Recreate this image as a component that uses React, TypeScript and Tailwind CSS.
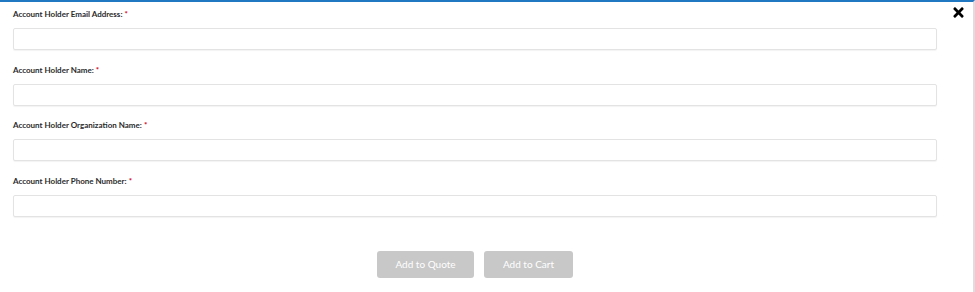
import { FaTimes } from "react-icons/fa";

const fields = [
  "Account Holder Email Address:",
  "Account Holder Name:",
  "Account Holder Organization Name:",
  "Account Holder Phone Number:",
];

export default function App() {
  return (
    <div className="relative h-[292px] w-[975px] overflow-hidden border-t-2 border-r-2 border-t-[#1f78c1] border-r-[#dedede] bg-white font-['Lato',sans-serif]">
      <button className="absolute right-[7px] top-[3px] text-black">
        <FaTimes size={15} />
      </button>

      <div className="w-[937px] pl-[13px] pt-[6px]">
        {fields.map((label) => (
          <div key={label} className="mb-[13.67px]">
            <label className="mb-[8px] flex h-[12px] items-center text-[8px] font-bold text-[#2b2b2b]">
              {label}
              <span className="ml-[2px] text-[#d0021b]">*</span>
            </label>
            <input
              type="text"
              className="block h-[22px] w-full rounded-[2px] border border-[#e3e3e3] bg-white shadow-[0_1px_1px_rgba(0,0,0,0.05)] outline-none"
            />
          </div>
        ))}

        <div className="mt-[34px] flex justify-center gap-[10px]">
          <button className="h-[27px] w-[97px] rounded-[3px] bg-[#c8c8c8] text-[10px] text-white">
            Add to Quote
          </button>
          <button className="h-[27px] w-[89px] rounded-[3px] bg-[#c8c8c8] text-[10px] text-white">
            Add to Cart
          </button>
        </div>
      </div>
    </div>
  );
}
